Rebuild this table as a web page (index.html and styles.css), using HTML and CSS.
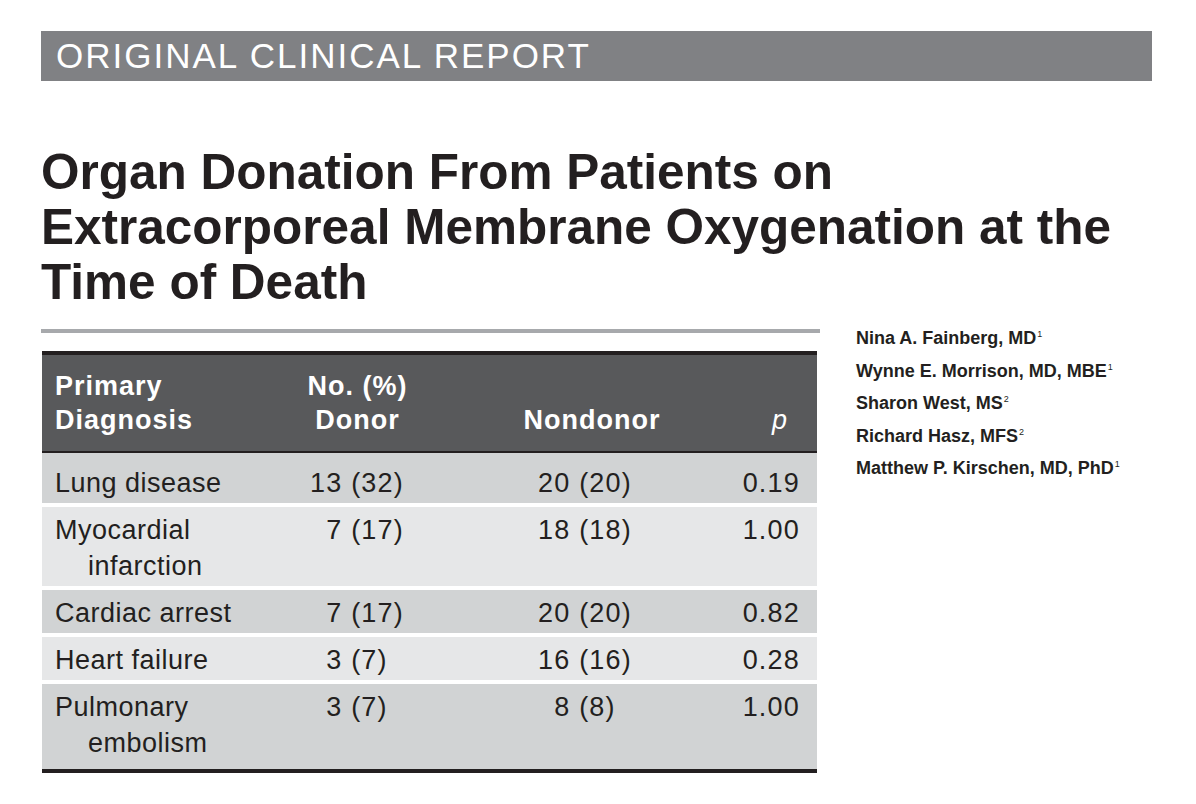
FILE: index.html
```html
<!DOCTYPE html>
<html lang="en">
<head>
<meta charset="utf-8">
<title>Organ Donation From Patients on ECMO</title>
<link rel="stylesheet" href="styles.css">
</head>
<body>
<div class="page">
  <div class="banner">ORIGINAL CLINICAL REPORT</div>
  <h1 class="title">Organ Donation From Patients on<br>Extracorporeal Membrane Oxygenation at the<br>Time of Death</h1>
  <div class="main">
    <div class="left">
      <div class="rule"></div>
      <table class="data">
        <colgroup>
          <col class="c1"><col class="c2"><col class="c3"><col class="c4">
        </colgroup>
        <thead>
          <tr>
            <th class="h1">Primary<br>Diagnosis</th>
            <th class="h2">No. (%)<br>Donor</th>
            <th class="h3">Nondonor</th>
            <th class="h4">p</th>
          </tr>
        </thead>
        <tbody>
          <tr class="dark first">
            <td class="diag">Lung disease</td>
            <td class="donor">13 (32)</td>
            <td class="nondonor">20 (20)</td>
            <td class="pval">0.19</td>
          </tr>
          <tr class="light">
            <td class="diag">Myocardial<br>infarction</td>
            <td class="donor">&#8199;7 (17)</td>
            <td class="nondonor">18 (18)</td>
            <td class="pval">1.00</td>
          </tr>
          <tr class="dark">
            <td class="diag">Cardiac arrest</td>
            <td class="donor">&#8199;7 (17)</td>
            <td class="nondonor">20 (20)</td>
            <td class="pval">0.82</td>
          </tr>
          <tr class="light">
            <td class="diag">Heart failure</td>
            <td class="donor">&#8199;3 (7)</td>
            <td class="nondonor">16 (16)</td>
            <td class="pval">0.28</td>
          </tr>
          <tr class="dark last">
            <td class="diag">Pulmonary<br>embolism</td>
            <td class="donor">&#8199;3 (7)</td>
            <td class="nondonor">&#8199;8 (8)</td>
            <td class="pval">1.00</td>
          </tr>
        </tbody>
      </table>
    </div>
    <div class="authors">
      <p>Nina A. Fainberg, MD<sup>1</sup></p>
      <p>Wynne E. Morrison, MD, MBE<sup>1</sup></p>
      <p>Sharon West, MS<sup>2</sup></p>
      <p>Richard Hasz, MFS<sup>2</sup></p>
      <p>Matthew P. Kirschen, MD, PhD<sup>1</sup></p>
    </div>
  </div>
</div>
</body>
</html>
```

FILE: styles.css
```css
html, body {
  margin: 0;
  padding: 0;
  background: #ffffff;
}

body {
  font-family: "Liberation Sans", Arial, Helvetica, sans-serif;
  color: #231f20;
}

.page {
  width: 1111px;
  padding: 31px 44px 0 41px;
}

.banner {
  height: 50px;
  background: #808184;
  color: #ffffff;
  font-size: 35px;
  line-height: 50px;
  letter-spacing: 2px;
  padding-left: 15px;
  white-space: nowrap;
}

.title {
  margin: 63px 0 0 0;
  font-size: 49.5px;
  line-height: 55px;
  font-weight: bold;
  color: #231f20;
  white-space: nowrap;
}

.main {
  display: flex;
  margin-top: 20px;
}

.left {
  width: 779px;
  flex: none;
}

.rule {
  height: 4px;
  background: #a7a9ac;
}

.data {
  margin: 18px 0 0 1px;
  width: 775px;
  table-layout: fixed;
  border-collapse: separate;
  border-spacing: 0;
  border-top: 4px solid #231f20;
  border-bottom: 4px solid #231f20;
}

.c1 { width: 248px; }
.c2 { width: 150px; }
.c3 { width: 290px; }
.c4 { width: 87px; }

.data th {
  background: #58595b;
  color: #ffffff;
  font-size: 27px;
  line-height: 34px;
  font-weight: bold;
  letter-spacing: 1px;
  padding: 14px 0 14px 0;
  border-bottom: 2px solid #231f20;
  vertical-align: bottom;
  white-space: nowrap;
}

.data th.h1 {
  text-align: left;
  padding-left: 13px;
}

.data th.h2 {
  text-align: center;
  padding-right: 15px;
}

.data th.h3 {
  text-align: center;
  padding-left: 14px;
}

.data th.h4 {
  text-align: right;
  padding-right: 30px;
  font-weight: normal;
  font-style: italic;
  letter-spacing: 0;
}

.data td {
  font-size: 27px;
  line-height: 36px;
  letter-spacing: 0.5px;
  color: #231f20;
  padding: 5px 0 2px 0;
  vertical-align: top;
  white-space: nowrap;
}

.data tr.dark { background: #d1d3d4; }
.data tr.light { background: #e6e7e8; }

.data tbody tr + tr td {
  border-top: 4px solid #ffffff;
}

.data tr.first td { padding-top: 12px; }
.data tr.last td { padding-bottom: 8px; }

.data td.diag {
  padding-left: 46px;
  text-indent: -33px;
}

.data td.donor,
.data td.nondonor,
.data td.pval {
  letter-spacing: 1.2px;
}

.data td.donor {
  text-align: left;
  padding-left: 20px;
}

.data td.nondonor {
  text-align: left;
  padding-left: 98px;
}

.data td.pval {
  text-align: right;
  padding-right: 17px;
}

.authors {
  padding-left: 36px;
  margin-top: -7px;
}

.authors p {
  margin: 0;
  font-size: 18px;
  line-height: 32.5px;
  font-weight: bold;
  color: #231f20;
  white-space: nowrap;
}

.authors sup {
  font-size: 9px;
  font-weight: normal;
  line-height: 0;
  vertical-align: 7px;
  margin-left: 1px;
}
```
